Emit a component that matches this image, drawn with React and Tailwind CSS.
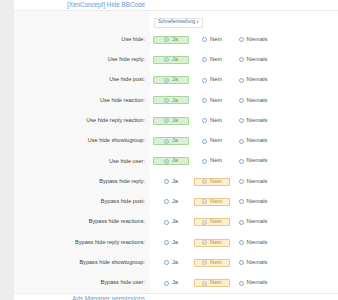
import React from 'react';

const rows = [
  { label: 'Use hide:', value: 'ja' },
  { label: 'Use hide reply:', value: 'ja' },
  { label: 'Use hide post:', value: 'ja' },
  { label: 'Use hide reaction:', value: 'ja' },
  { label: 'Use hide reply reaction:', value: 'ja' },
  { label: 'Use hide showtogroup:', value: 'ja' },
  { label: 'Use hide user:', value: 'ja' },
  { label: 'Bypass hide reply:', value: 'nein' },
  { label: 'Bypass hide post:', value: 'nein' },
  { label: 'Bypass hide reactions:', value: 'nein' },
  { label: 'Bypass hide reply reactions:', value: 'nein' },
  { label: 'Bypass hide showtogroup:', value: 'nein' },
  { label: 'Bypass hide user:', value: 'nein' },
];

const CheckIcon = ({ color }) => (
  <svg width="5" height="5" viewBox="0 0 10 10" className="shrink-0">
    <circle cx="5" cy="5" r="4.2" fill="none" stroke={color} strokeWidth="1.2" />
    <path d="M3 5.2 L4.5 6.6 L7.1 3.6" fill="none" stroke={color} strokeWidth="1.2" />
  </svg>
);

const Radio = () => (
  <span className="w-[5px] h-[5px] rounded-full border border-[#7ea8cf] bg-white shrink-0" />
);

const Option = ({ text, selected, tone }) => {
  if (selected) {
    const box = tone === 'green'
      ? 'bg-[#daf0d3] border-[#a9d69b] text-[#6e9a60]'
      : 'bg-[#fdefcf] border-[#e6c88c] text-[#b39352]';
    return (
      <div className={`w-[36px] h-[8px] flex items-center justify-center gap-[3px] border rounded-[1px] ${box}`}>
        <CheckIcon color={tone === 'green' ? '#6aa6c4' : '#9aa7b0'} />
        <span>{text}</span>
      </div>
    );
  }
  return (
    <div className="w-[36px] h-[8px] flex items-center justify-center gap-[3px] text-[#555]">
      <Radio />
      <span>{text}</span>
    </div>
  );
};

export default function App() {
  return (
    <div className="flex w-[338px] h-[300px] overflow-hidden bg-white font-['Liberation_Sans',sans-serif]">
      <div className="w-[14px] bg-[#ececec] shrink-0" />
      <div className="flex-1 flex flex-col">
        <div className="h-[11px] shrink-0 flex items-center border-b border-[#ececec]">
          <div className="w-[136px] pr-[5px] text-right text-[6.3px] text-[#5b9bd6] leading-none whitespace-nowrap">
            [XenConcept] Hide BBCode
          </div>
        </div>
        <div className="flex h-[18.4px] shrink-0">
          <div className="w-[136px] bg-[#f8f8f8]" />
          <div className="pl-[4px] pt-[6.5px]">
            <div className="h-[10px] px-[3px] flex items-center gap-[1px] border border-[#e2e2e2] rounded-[1px] bg-white shadow-[0_0_1px_rgba(0,0,0,0.08)] text-[4.6px] text-[#4c6f91] leading-none">
              <span>Schnelleinstellung</span>
              <span className="text-[3px]">▼</span>
            </div>
          </div>
        </div>
        {rows.map((row) => (
          <div key={row.label} className="flex h-[20.3px] shrink-0">
            <div className="w-[136px] bg-[#f8f8f8] flex items-center justify-end pr-[5px] text-[5.6px] text-[#444] leading-none whitespace-nowrap">
              {row.label}
            </div>
            <div className="flex items-center pl-[3px] gap-[5px] text-[5.8px] leading-none whitespace-nowrap">
              <Option text="Ja" selected={row.value === 'ja'} tone="green" />
              <Option text="Nein" selected={row.value === 'nein'} tone="yellow" />
              <Option text="Niemals" selected={false} />
            </div>
          </div>
        ))}
        <div className="flex shrink-0 border-t border-[#ececec] pt-[2px]">
          <div className="w-[136px] pr-[5px] text-right text-[6.3px] text-[#5b9bd6] leading-none whitespace-nowrap">
            Ads Manager permissions
          </div>
        </div>
      </div>
    </div>
  );
}
